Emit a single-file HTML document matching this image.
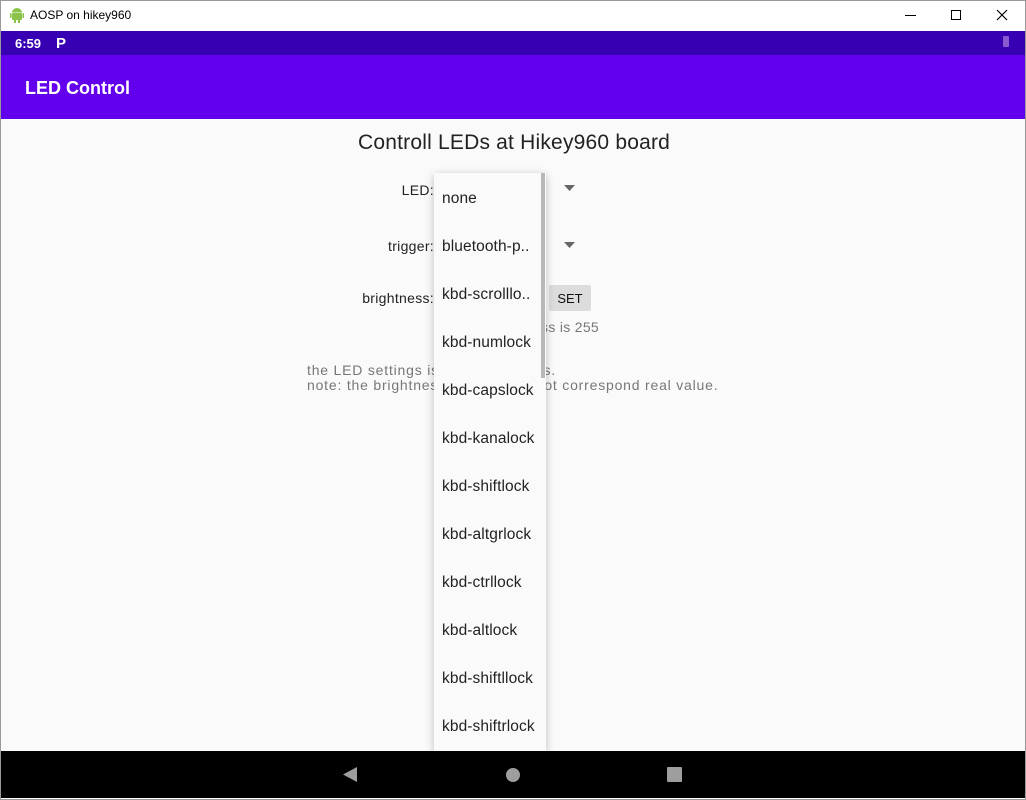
<!DOCTYPE html>
<html><head><style>
*{margin:0;padding:0;box-sizing:border-box}
body{width:1026px;height:800px;overflow:hidden;font-family:"Liberation Sans",sans-serif;background:#fff;position:relative}
.abs{position:absolute}
.t{white-space:nowrap}
.lbl{position:absolute;right:592px;font-size:14px;color:#222;white-space:nowrap;letter-spacing:0.3px}
</style></head><body>
<div class="abs" style="left:0;top:0;width:1026px;height:800px;border:1px solid #999"></div>
<div class="abs" style="left:1px;top:1px;width:1024px;height:30px;background:#fff"></div>
<svg class="abs" style="left:10px;top:7px" width="14" height="17" viewBox="0 0 14 17"><rect x="2" y="6" width="10" height="7" rx="1" fill="#8bc34a"/><path d="M2 5.5a5 4.5 0 0 1 10 0z" fill="#8bc34a"/><rect x="0" y="6" width="1.6" height="5" rx=".8" fill="#8bc34a"/><rect x="12.4" y="6" width="1.6" height="5" rx=".8" fill="#8bc34a"/><rect x="4" y="12" width="2" height="4" fill="#8bc34a"/><rect x="8" y="12" width="2" height="4" fill="#8bc34a"/></svg>
<div class="abs t" style="left:30px;top:8px;font-size:12px;color:#000">AOSP on hikey960</div>
<div class="abs" style="left:905px;top:15px;width:11px;height:1px;background:#000"></div>
<div class="abs" style="left:951px;top:10px;width:10px;height:10px;border:1px solid #000"></div>
<svg class="abs" style="left:996px;top:9px" width="12" height="12"><path d="M1 1L11 11M11 1L1 11" stroke="#000" stroke-width="1.2"/></svg>
<div class="abs" style="left:1px;top:31px;width:1024px;height:24px;background:#3700b3"></div>
<div class="abs t" style="left:15px;top:36px;font-size:13px;font-weight:bold;color:#fff">6:59</div>
<div class="abs t" style="left:56px;top:35px;font-size:15px;font-weight:900;color:#fff">P</div>
<div class="abs" style="left:1003px;top:36px;width:6px;height:11px;background:#8a5ad0;border-radius:1px"></div>
<div class="abs" style="left:1px;top:55px;width:1024px;height:64px;background:#6200ee"></div>
<div class="abs t" style="left:25px;top:77px;font-size:18px;font-weight:bold;color:#fff;line-height:22px">LED Control</div>
<div class="abs" style="left:1px;top:119px;width:1024px;height:632px;background:#fafafa"></div>
<div class="abs t" style="left:358px;top:131px;font-size:21px;color:#222;letter-spacing:0.2px">Controll LEDs at Hikey960 board</div>
<div class="lbl" style="top:182px">LED:</div>
<div class="lbl" style="top:238px">trigger:</div>
<div class="lbl" style="top:290px">brightness:</div>
<svg class="abs" style="left:564px;top:185px" width="12" height="6"><path d="M0 0h11L5.5 6z" fill="#666"/></svg>
<svg class="abs" style="left:564px;top:242px" width="12" height="6"><path d="M0 0h11L5.5 6z" fill="#666"/></svg>
<div class="abs t" style="left:549px;top:285px;width:42px;height:26px;background:#dcdcdc;font-size:13px;color:#111;text-align:center;line-height:27px;border-radius:2px">SET</div>
<div class="abs t" style="right:427px;top:319px;font-size:14px;color:#777;letter-spacing:0.3px">max brightness is 255</div>
<div class="abs t" style="left:307px;top:363px;font-size:14px;color:#777;line-height:15px;letter-spacing:0.8px">the LED settings is read from sysfs.<br>note: the brightness value might not correspond real value.</div>
<div class="abs" style="left:434px;top:173px;width:112px;height:578px;background:#fafafa;box-shadow:0 2px 8px rgba(0,0,0,.25)"></div>
<div class="abs" style="left:541px;top:173px;width:4px;height:205px;background:#b8b8b8"></div>
<div class="abs t" style="left:442px;top:190px;font-size:15.5px;color:#222;line-height:48px;letter-spacing:0.1px">
<div style="margin-top:-15px">none</div><div>bluetooth-p..</div><div>kbd-scrolllo..</div><div>kbd-numlock</div><div>kbd-capslock</div><div>kbd-kanalock</div><div>kbd-shiftlock</div><div>kbd-altgrlock</div><div>kbd-ctrllock</div><div>kbd-altlock</div><div>kbd-shiftllock</div><div>kbd-shiftrlock</div>
</div>
<div class="abs" style="left:1px;top:751px;width:1024px;height:47px;background:#000"></div>
<svg class="abs" style="left:343px;top:767px" width="15" height="15"><path d="M14 0v15L0 7.5z" fill="#9e9e9e"/></svg>
<div class="abs" style="left:506px;top:768px;width:14px;height:14px;border-radius:50%;background:#9e9e9e"></div>
<div class="abs" style="left:667px;top:767px;width:15px;height:15px;border-radius:1px;background:#9e9e9e"></div>
</body></html>
